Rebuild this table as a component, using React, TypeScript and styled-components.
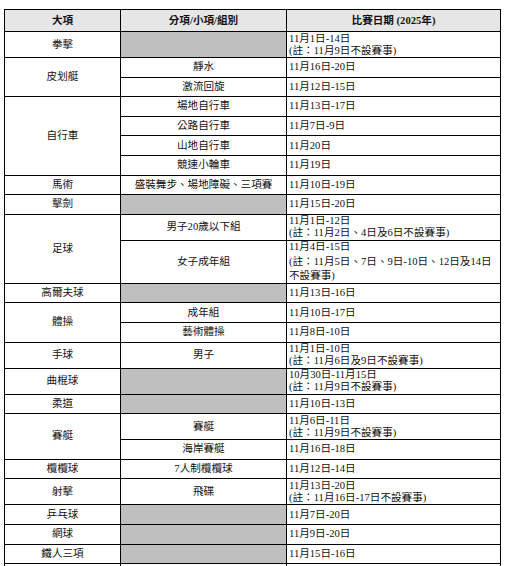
import React from 'react'
import styled, { createGlobalStyle } from 'styled-components'

const GlobalStyle = createGlobalStyle`
  html, body {
    margin: 0;
    padding: 0;
    background: #ffffff;
  }
  body {
    font-family: 'Liberation Serif', 'Noto Sans CJK TC', serif;
    color: #111;
  }
`

const Page = styled.div`
  padding: 9px 0 0 4px;
`

const Grid = styled.div<{ $rows: string }>`
  display: grid;
  width: 495px;
  grid-template-columns: 115px 165px 213px;
  grid-template-rows: ${(p) => p.$rows};
  gap: 1px;
  background: #000;
  border: 1px solid #000;
  font-size: 10.6px;
  line-height: 12px;
`

const HeadCell = styled.div`
  display: flex;
  align-items: center;
  justify-content: center;
  background: #e6e6e6;
  font-weight: bold;
`

const SportCell = styled.div<{ $row: number; $span: number }>`
  grid-column: 1;
  grid-row: ${(p) => p.$row} / span ${(p) => p.$span};
  display: flex;
  align-items: center;
  justify-content: center;
  background: #fff;
`

const EventCell = styled.div<{ $row: number; $blank?: boolean }>`
  grid-column: 2;
  grid-row: ${(p) => p.$row};
  display: flex;
  align-items: center;
  justify-content: center;
  background: ${(p) => (p.$blank ? '#bfbfbf' : '#fff')};
`

const DateCell = styled.div<{ $row: number; $loose?: boolean }>`
  grid-column: 3;
  grid-row: ${(p) => p.$row};
  display: flex;
  flex-direction: column;
  justify-content: center;
  padding-left: 2px;
  background: #fff;
  line-height: ${(p) => (p.$loose ? '14.2px' : '12px')};
  white-space: nowrap;
`

type Item = { event?: string; dates: string[] }
type Sport = { name: string; items: Item[] }

const sports: Sport[] = [
  { name: '拳擊', items: [{ dates: ['11月1日-14日', '(註：11月9日不設賽事)'] }] },
  {
    name: '皮划艇',
    items: [
      { event: '靜水', dates: ['11月16日-20日'] },
      { event: '激流回旋', dates: ['11月12日-15日'] },
    ],
  },
  {
    name: '自行車',
    items: [
      { event: '場地自行車', dates: ['11月13日-17日'] },
      { event: '公路自行車', dates: ['11月7日-9日'] },
      { event: '山地自行車', dates: ['11月20日'] },
      { event: '競速小輪車', dates: ['11月19日'] },
    ],
  },
  { name: '馬術', items: [{ event: '盛裝舞步、場地障礙、三項賽', dates: ['11月10日-19日'] }] },
  { name: '擊劍', items: [{ dates: ['11月15日-20日'] }] },
  {
    name: '足球',
    items: [
      { event: '男子20歲以下組', dates: ['11月1日-12日', '(註：11月2日、4日及6日不設賽事)'] },
      {
        event: '女子成年組',
        dates: ['11月4日-15日', '(註：11月5日、7日、9日-10日、12日及14日', '不設賽事)'],
      },
    ],
  },
  { name: '高爾夫球', items: [{ dates: ['11月13日-16日'] }] },
  {
    name: '體操',
    items: [
      { event: '成年組', dates: ['11月10日-17日'] },
      { event: '藝術體操', dates: ['11月8日-10日'] },
    ],
  },
  { name: '手球', items: [{ event: '男子', dates: ['11月1日-10日', '(註：11月6日及9日不設賽事)'] }] },
  { name: '曲棍球', items: [{ dates: ['10月30日-11月15日', '(註：11月9日不設賽事)'] }] },
  { name: '柔道', items: [{ dates: ['11月10日-13日'] }] },
  {
    name: '賽艇',
    items: [
      { event: '賽艇', dates: ['11月6日-11日', '(註：11月9日不設賽事)'] },
      { event: '海岸賽艇', dates: ['11月16日-18日'] },
    ],
  },
  { name: '欖欖球', items: [{ event: '7人制欖欖球', dates: ['11月12日-14日'] }] },
  { name: '射擊', items: [{ event: '飛碟', dates: ['11月13日-20日', '(註：11月16日-17日不設賽事)'] }] },
  { name: '乒乓球', items: [{ dates: ['11月7日-20日'] }] },
  { name: '網球', items: [{ dates: ['11月9日-20日'] }] },
  { name: '鐵人三項', items: [{ dates: ['11月15日-16日'] }] },
  // next row only starts at the bottom edge of the page
  { name: '', items: [{ event: '', dates: [] }] },
]

const trackFor = (lines: number) => (lines <= 1 ? '18.6px' : lines === 2 ? '25px' : '42px')

export default function App() {
  const tracks: string[] = ['21px']
  let row = 2
  const cells: React.ReactNode[] = []

  sports.forEach((sport, s) => {
    cells.push(
      <SportCell key={`s${s}`} $row={row} $span={sport.items.length}>
        {sport.name}
      </SportCell>
    )
    sport.items.forEach((item, i) => {
      tracks.push(trackFor(item.dates.length))
      cells.push(
        <EventCell key={`e${s}-${i}`} $row={row} $blank={item.event === undefined}>
          {item.event}
        </EventCell>,
        <DateCell key={`d${s}-${i}`} $row={row} $loose={item.dates.length > 2}>
          {item.dates.map((line, j) => (
            <div key={j}>{line}</div>
          ))}
        </DateCell>
      )
      row++
    })
  })

  return (
    <>
      <GlobalStyle />
      <Page>
        <Grid $rows={tracks.join(' ')}>
          <HeadCell>大項</HeadCell>
          <HeadCell>分項/小項/組別</HeadCell>
          <HeadCell>比賽日期 (2025年)</HeadCell>
          {cells}
        </Grid>
      </Page>
    </>
  )
}
